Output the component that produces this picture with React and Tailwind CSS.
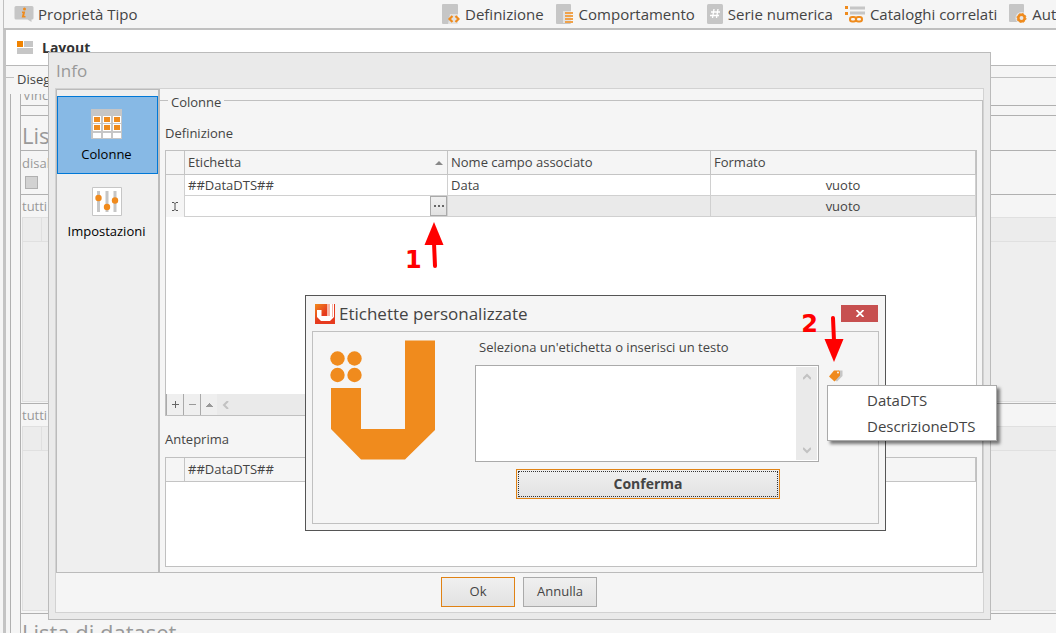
import { useState } from 'react';

const InfoIcon = () => (
  <svg className="shrink-0" width="20" height="18" viewBox="0 0 20 18">
    <path d="M2 1h16a1.500 1.500 0 0 1 1.500 1.500V13a1.500 1.500 0 0 1-1.500 1.500h-.5V17l-4-2.500H2A1.500 1.500 0 0 1 .5 13V2.500A1.500 1.500 0 0 1 2 1z" fill="#c6c6c6" />
    <circle cx="10.500" cy="4" r="1.500" fill="#ef8b1d" />
    <path d="M8 6.500h3.200l-1 4.500h1.300v1.500H7.700l1.100-4.600H8z" fill="#ef8b1d" />
  </svg>
);

const CodeIcon = () => (
  <svg className="shrink-0" width="18" height="20" viewBox="0 0 18 20">
    <rect width="16" height="20" rx="1" fill="#c6c6c6" />
    <path d="M8 10h10v10H6z" fill="#f5f5f5" opacity=".6" />
    <path d="M10.500 12L7.500 15l3 3M13.500 12l3 3-3 3" fill="none" stroke="#ef8b1d" strokeWidth="2.200" />
  </svg>
);

const ListIcon = () => (
  <svg className="shrink-0" width="18" height="20" viewBox="0 0 18 20">
    <rect width="15" height="20" rx="1" fill="#c6c6c6" />
    <path d="M7 7h10v12H7z" fill="#f5f5f5" opacity=".6" />
    <path d="M9 9h8M9 12h8M9 15h8M9 18h8" stroke="#f0a24a" strokeWidth="2" />
  </svg>
);

const HashIcon = () => (
  <svg className="shrink-0" width="16" height="20" viewBox="0 0 16 20">
    <rect width="16" height="20" rx="1.500" fill="#c6c6c6" />
    <path d="M7 5l-1.500 9M11 5l-1.500 9M4 8h9M3 11.500h9" stroke="#fff" strokeWidth="1.300" />
  </svg>
);

const LinkIcon = () => (
  <svg className="shrink-0" width="20" height="18" viewBox="0 0 20 18">
    <path d="M5 3h15M5 8h15" stroke="#c6c6c6" strokeWidth="3" />
    <path d="M0 1h3v3H0zM0 7h3v3H0z" fill="#ef8b1d" />
    <rect x="3" y="10" width="16" height="8" fill="#f5f5f5" />
    <rect x="5" y="12" width="6" height="4.500" rx="2.200" fill="none" stroke="#ef8b1d" strokeWidth="2" />
    <rect x="11" y="12" width="6" height="4.500" rx="2.200" fill="none" stroke="#ef8b1d" strokeWidth="2" />
  </svg>
);

const GearIcon = () => (
  <svg className="shrink-0" width="18" height="20" viewBox="0 0 18 20">
    <rect width="15" height="18" rx="1" fill="#c6c6c6" />
    <circle cx="12.500" cy="14" r="6" fill="#f5f5f5" opacity=".7" />
    <circle cx="12.500" cy="14" r="3.200" fill="none" stroke="#ef8b1d" strokeWidth="2.500" />
    <circle cx="12.500" cy="14" r="4.500" fill="none" stroke="#ef8b1d" strokeWidth="1" strokeDasharray="2 1.500" />
  </svg>
);

const LayoutIcon = () => (
  <svg className="shrink-0" width="16" height="13" viewBox="0 0 16 13">
    <path d="M0 0h6v6H0z" fill="#f08300" />
    <path d="M7 0h9v6H7zM0 7h16v6H0z" fill="#c6c6c6" />
  </svg>
);

const ColumnsIcon = () => (
  <svg width="32" height="30" viewBox="0 0 32 30">
    <path d="M0 0h31v30H0z" fill="#c6c6c6" />
    {[2, 12, 22].map((x) => (
      <g key={x}>
        <path d={`M${x} 7h8v7h-8zM${x} 15h8v7h-8zM${x} 24h8v5h-8z`} fill="#fff" />
        <path d={`M${x + 1} 8h6v5h-6zM${x + 1} 16h6v5h-6z`} fill="#ef8b1d" />
      </g>
    ))}
  </svg>
);

const SlidersIcon = () => (
  <svg width="30" height="29" viewBox="0 0 30 29">
    <path d="M.5.5h29v28H.5z" fill="#fff" stroke="#c6c6c6" />
    <path d="M6.500 4v21M15 4v21M23 4v21" stroke="#c6c6c6" strokeWidth="3" />
    <circle cx="6.500" cy="11" r="3.200" fill="#f08a1c" />
    <circle cx="15" cy="20" r="3.200" fill="#f08a1c" />
    <circle cx="23" cy="13.500" r="3.200" fill="#f08a1c" />
  </svg>
);

const AppIcon = () => (
  <svg className="shrink-0" width="20" height="20" viewBox="0 0 20 20">
    <defs>
      <linearGradient id="app" x1="0" y1="0" x2=".8" y2=".8">
        <stop offset="0" stopColor="#f08a1c" />
        <stop offset=".6" stopColor="#e63a1e" />
      </linearGradient>
    </defs>
    <path d="M0 0h20v20H0z" fill="url(#app)" />
    <path d="M12 0h3v12h-3z" fill="#f6b5a6" />
    <path d="M15 0h4v13l-4 4H6l-4-4V6h4.500v6H15z" fill="#fff" />
    <path d="M17 0h1v13h-1z" fill="#f6b5a6" />
  </svg>
);

const Logo = () => (
  <svg className="shrink-0" width="106" height="120" viewBox="0 0 106 120">
    <g fill="#f08b1d">
      <circle cx="7.500" cy="18.500" r="7.200" />
      <circle cx="24.500" cy="18.500" r="7.200" />
      <circle cx="7.500" cy="35" r="7.200" />
      <circle cx="24.500" cy="35" r="7.200" />
      <path d="M1 48h30v41h44V.5h30V90l-30 29.500H31L1 89z" />
    </g>
  </svg>
);

const TagIcon = () => (
  <svg width="14" height="12" viewBox="0 0 14 12">
    <path d="M9 .5h4.500V6L8 11.500 5.500 10z" fill="#c6c6c6" />
    <path d="M5 .5h5L11 1.500v4L5.500 11.500 0 6.500z" fill="#f08a1c" />
    <circle cx="9" cy="2.500" r=".9" fill="#fff" />
  </svg>
);

const Arrow = ({ className }) => (
  <svg className={className} width="20" height="48" viewBox="0 0 20 48">
    <path d="M10 1L19.500 24H.5z" fill="#f00" />
    <path d="M10 22l1 23" stroke="#f00" strokeWidth="4" strokeLinecap="round" />
  </svg>
);

const Chevron = ({ d }) => (
  <svg width="8" height="8" viewBox="0 0 8 8">
    <path d={d} fill="none" stroke="#c2c2c2" strokeWidth="2" />
  </svg>
);

const menu = [
  { label: 'Definizione', Icon: CodeIcon },
  { label: 'Comportamento', Icon: ListIcon },
  { label: 'Serie numerica', Icon: HashIcon },
  { label: 'Cataloghi correlati', Icon: LinkIcon },
  { label: 'Auto', Icon: GearIcon },
];

const sections = [
  { label: 'Colonne', Icon: ColumnsIcon },
  { label: 'Impostazioni', Icon: SlidersIcon },
];

const buttonStyle = 'border bg-gradient-to-b from-[#f0f0f0] to-[#e2e2e2] text-[#444]';

const DatasetGrid = () => (
  <>
    <div className="h-[22px] pl-px text-[13px] leading-[22px] text-[#999]">tutti</div>
    <div className="ml-px h-[185px] border border-r-0 border-[#e0e0e0] bg-[#eee]">
      <div className="flex h-6 border-b border-[#e0e0e0] bg-[#ececec]">
        <div className="w-[19px] border-r border-[#e0e0e0]" />
      </div>
    </div>
  </>
);

const Designer = () => (
  <div className="ml-[3px] flex-1 border-l-[3px] border-[#c4c4c4] bg-[#f5f5f5]">
    <div className="flex h-9 items-center gap-[9px] border-b border-[#b8b8b8] bg-white pl-[11px]">
      <LayoutIcon />
      <h1 className="text-[14px] font-bold text-[#333]">Layout</h1>
    </div>
    <div className="flex h-7 items-center">
      <span className="-mt-1.5 w-2 border-t border-[#c0c0c0]" />
      <span className="px-[3px] text-[13px] text-[#444]">Disegno</span>
      <span className="-mt-1.5 flex-1 border-t border-[#c0c0c0]" />
    </div>
    <div className="ml-1 border-l border-[#b0b0b0] pl-[9px]">
      <div className="border-l border-[#b0b0b0]">
        <div className="flex h-3 items-end overflow-hidden border-b border-[#b0b0b0] pl-0.5 text-[13px] leading-5 text-[#999]">Vincoli</div>
        <div className="h-2.5 border-b border-[#b0b0b0]" />
        <div className="h-[35px] border-b border-[#b0b0b0] pl-px text-[22px] leading-[38px] text-[#999]">Lista</div>
        <div className="h-11 border-b border-[#b0b0b0] pl-px text-[13px] text-[#999]">
          <label htmlFor="disabled-list" className="block h-[25px] leading-6">disabilita</label>
          <input id="disabled-list" type="checkbox" disabled className="ml-[3px] block size-[13px] appearance-none border border-[#b0b0b0] bg-[#d2d2d2]" />
        </div>
        <DatasetGrid />
        <div className="mt-px border-t border-[#b0b0b0]"><DatasetGrid /></div>
        <div className="mt-0.5 border-t border-[#b0b0b0] pl-px text-[22px] leading-9 text-[#999]">Lista di dataset</div>
      </div>
    </div>
  </div>
);

const InfoDialog = ({ section, setSection }) => (
  <section className="absolute top-[52px] right-[65px] bottom-[13px] left-12 flex flex-col border border-[#bbb] bg-[#eaeaea] px-1.5 pb-1.5">
    <h2 className="h-[35px] pl-px text-[17px] leading-9 text-[#999]">Info</h2>
    <div className="flex min-h-0 flex-1 flex-col border border-[#d2d2d2] bg-[#f5f5f5]">
      <div className="flex min-h-0 flex-1 border-b border-[#bbb]">
        <nav className="flex w-[104px] shrink-0 flex-col border border-r-2 border-b-0 border-[#bbb] bg-[#efefef] pt-1.5">
          {sections.map(({ label, Icon }) => (
            <button
              key={label}
              onClick={() => setSection(label)}
              className={`flex h-[78px] flex-col items-center gap-1.5 border pt-3 pr-0.5 text-[13px] text-black ${section === label ? 'border-[#0078d7] bg-[#87b9e5]' : 'border-transparent'}`}
            >
              <Icon />
              <span className="leading-[18px]">{label}</span>
            </button>
          ))}
        </nav>
        <div className="relative mt-[11px] flex flex-1 flex-col border-t border-r border-[#c0c0c0] px-[5px] pb-[5px] text-[13px] text-[#444]">
          <h3 className="absolute -top-[11px] left-2 bg-[#f5f5f5] px-[3px] leading-6">Colonne</h3>
          <h4 className="h-[49px] pt-[22px] leading-5">Definizione</h4>
          <div className="flex flex-1 flex-col border border-[#c0c0c0] bg-white">
            <table className="w-full table-fixed border-separate border-spacing-0 text-left">
              <thead>
                <tr className="h-6 bg-[#f5f5f5] *:border-r *:border-b *:border-[#c4c4c4] *:p-0 *:font-normal">
                  <th className="w-[19px]" />
                  <th className="w-[263px]">
                    <span className="flex items-center justify-between pr-1 pl-[3px]">
                      Etichetta
                      <svg width="8" height="4"><path d="M4 0l4 4H0z" fill="#888" /></svg>
                    </span>
                  </th>
                  <th className="w-[263px]"><span className="pl-[3px]">Nome campo associato</span></th>
                  <th><span className="pl-[3px]">Formato</span></th>
                </tr>
              </thead>
              <tbody className="leading-5">
                <tr className="*:border-r *:border-[#d0d0d0] *:p-0">
                  <td className="bg-[#f5f5f5]" />
                  <td className="border-b"><span className="pl-[3px]">##DataDTS##</span></td>
                  <td className="border-b"><span className="pl-[3px]">Data</span></td>
                  <td className="border-b text-center">vuoto</td>
                </tr>
                <tr className="*:border-r *:border-[#d0d0d0] *:p-0">
                  <td className="bg-[#f5f5f5]">
                    <svg className="mx-auto" width="6" height="9" viewBox="0 0 6 9"><path d="M0 .5h2l1 1 1-1h2M0 8.500h2l1-1 1 1h2M3 1v7" fill="none" stroke="#555" /></svg>
                  </td>
                  <td className="border-b">
                    <div className="flex h-5">
                      <input aria-label="Etichetta" className="min-w-0 flex-1 px-[3px] outline-none" />
                      <button aria-label="Sfoglia" className={`flex w-[17px] items-center justify-center border-[#aaa] ${buttonStyle}`}>
                        <svg width="10" height="2"><path d="M0 0h2v2H0zM4 0h2v2H4zM8 0h2v2H8z" fill="#666" /></svg>
                      </button>
                    </div>
                  </td>
                  <td className="border-b bg-[#eaeaea]" />
                  <td className="border-b bg-[#eaeaea] text-center">vuoto</td>
                </tr>
              </tbody>
            </table>
            <div className="mt-auto flex h-[21px] bg-[#eaeaea]">
              {[
                ['Aggiungi', 'M0 3.500h7M3.500 0v7', '#666'],
                ['Rimuovi', 'M0 3.500h7', '#999'],
                ['Sposta su', 'M3 2.500h1M2 3.500h3M1 4.500h5M0 5.500h7', '#999'],
              ].map(([label, d, color]) => (
                <button key={label} aria-label={label} className="flex w-[17px] items-center justify-center border-l border-[#aaa] bg-[#efefef]">
                  <svg width="7" height="7" viewBox="0 0 7 7"><path d={d} fill="none" stroke={color} /></svg>
                </button>
              ))}
              <button aria-label="Scorri a sinistra" className="flex w-[18px] items-center justify-center"><Chevron d="M6 0L2 4l4 4" /></button>
            </div>
          </div>
          <h4 className="h-[41px] pt-[13px] leading-5">Anteprima</h4>
          <div className="h-[110px] border border-[#c0c0c0] bg-white">
            <table className="w-full table-fixed border-separate border-spacing-0 text-left">
              <thead>
                <tr className="h-6 bg-[#f5f5f5] *:border-r *:border-b *:border-[#c4c4c4] *:p-0 *:font-normal">
                  <th className="w-[19px]" />
                  <th><span className="pl-[3px]">##DataDTS##</span></th>
                </tr>
              </thead>
            </table>
          </div>
        </div>
      </div>
      <div className="flex h-[39px] items-center justify-center gap-2 pr-px pb-0.5 text-[13px]">
        <button className={`h-[30px] w-[74px] border-[#e08214] ${buttonStyle}`}>Ok</button>
        <button className={`h-[30px] w-[74px] border-[#aaa] ${buttonStyle}`}>Annulla</button>
      </div>
    </div>
    <div className="absolute top-[168px] left-[356px] flex items-end">
      <span className="font-['DejaVu_Sans',sans-serif] text-[24px] leading-[18px] font-bold text-[#f00]">1</span>
      <Arrow className="ml-0.5" />
    </div>
  </section>
);

const LabelDialog = ({ text, setText }) => (
  <section className="absolute top-[295px] right-[170px] left-[305px] border border-[#555] bg-[#f5f5f5] px-1.5 pb-1.5 text-[13px] text-[#444]">
    <div className="flex h-[35px] items-center gap-1 pl-[3px]">
      <AppIcon />
      <h2 className="flex-1 text-[17px]">Etichette personalizzate</h2>
      <button aria-label="Chiudi" className="mr-px flex h-[17px] w-[37px] items-center justify-center bg-[#c75050]">
        <svg width="8" height="7" viewBox="0 0 8 7"><path d="M.5 0l7 7M7.500 0l-7 7" stroke="#fff" strokeWidth="1.800" /></svg>
      </button>
    </div>
    <div className="flex h-[193px] gap-[39px] border border-[#c0c0c0] pt-2 pl-[17px]">
      <Logo />
      <div className="flex-1">
        <label htmlFor="label-text" className="block h-[25px] pl-1 leading-[14px]">Seleziona un'etichetta o inserisci un testo</label>
        <div className="flex gap-2.5">
          <div className="flex h-[97px] flex-1 border border-[#aaa] bg-white p-px">
            <textarea id="label-text" value={text} onChange={(e) => setText(e.target.value)} className="min-w-0 flex-1 resize-none px-1 outline-none" />
            <div className="flex w-[21px] flex-col items-center justify-between bg-[#eaeaea] py-1.5">
              <Chevron d="M0 6l4-4 4 4" />
              <Chevron d="M0 2l4 4 4-4" />
            </div>
          </div>
          <button aria-label="Etichette" className="mr-[35px] self-start pt-[5px]"><TagIcon /></button>
        </div>
        <button className={`mt-[7px] ml-[41px] h-[30px] w-[264px] border-[#e08214] p-px font-bold ${buttonStyle}`}>
          <span className="flex h-full items-center justify-center border border-dotted border-[#333] pb-0.5 text-[14px]">Conferma</span>
        </button>
      </div>
    </div>
    <div className="absolute top-[19px] right-[41px] flex items-start">
      <span className="font-['DejaVu_Sans',sans-serif] text-[24px] leading-[18px] font-bold text-[#f00]">2</span>
      <Arrow className="ml-1.5 rotate-180" />
    </div>
    <ul className="absolute top-[89px] -right-[112px] w-[170px] border border-[#aaa] bg-white py-px text-[15px] leading-6 shadow-[3px_3px_3px_rgba(0,0,0,0.5)]">
      {['DataDTS', 'DescrizioneDTS'].map((name) => (
        <li key={name}>
          <button onClick={() => setText(`##${name}##`)} className="h-[26px] w-full pl-[39px] text-left">{name}</button>
        </li>
      ))}
    </ul>
  </section>
);

const App = () => {
  const [section, setSection] = useState('Colonne');
  const [text, setText] = useState('');

  return (
    <div className="relative flex h-screen flex-col overflow-hidden bg-[#f5f5f5] font-['Open_Sans',sans-serif]">
      <header className="ml-[3px] flex h-[30px] shrink-0 items-center border-b-2 border-l border-[#c0c0c0] text-[15px] text-[#444]">
        <div className="flex w-[438px] shrink-0 items-center gap-1 pl-2.5">
          <InfoIcon />
          Proprietà Tipo
        </div>
        <nav className="flex gap-3 whitespace-nowrap">
          {menu.map(({ label, Icon }) => (
            <a key={label} href="#" className="flex items-center gap-[5px]">
              <Icon />
              {label}
            </a>
          ))}
        </nav>
      </header>
      <Designer />
      <InfoDialog section={section} setSection={setSection} />
      <LabelDialog text={text} setText={setText} />
    </div>
  );
};

export default App;
